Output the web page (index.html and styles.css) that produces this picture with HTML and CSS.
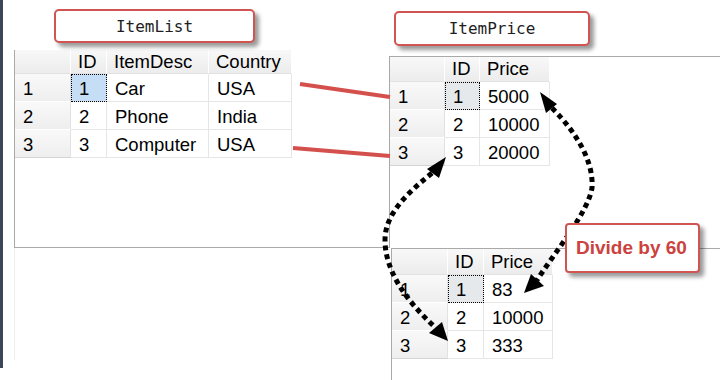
FILE: index.html
```html
<!DOCTYPE html>
<html lang="en">
	<head>
		<meta charset="utf-8" />
		<title>ItemList / ItemPrice</title>
		<link rel="stylesheet" href="styles.css">
	</head>
	<body>
		<div class="board">
			<div class="edge"></div>
			<div class="gutter"></div>

			<!-- result grid: ItemList -->
			<div class="pane pane-list">
				<div class="grid grid-list">
					<div class="cell head"></div>
					<div class="cell head">ID</div>
					<div class="cell head">ItemDesc</div>
					<div class="cell head">Country</div>

					<div class="cell rowhead">1</div>
					<div class="cell current">1</div>
					<div class="cell">Car</div>
					<div class="cell">USA</div>

					<div class="cell rowhead">2</div>
					<div class="cell">2</div>
					<div class="cell">Phone</div>
					<div class="cell">India</div>

					<div class="cell rowhead last">3</div>
					<div class="cell">3</div>
					<div class="cell">Computer</div>
					<div class="cell">USA</div>
				</div>
			</div>

			<!-- result grid: ItemPrice -->
			<div class="pane pane-price">
				<div class="grid grid-price">
					<div class="cell head"></div>
					<div class="cell head">ID</div>
					<div class="cell head">Price</div>

					<div class="cell rowhead">1</div>
					<div class="cell current idle">1</div>
					<div class="cell">5000</div>

					<div class="cell rowhead">2</div>
					<div class="cell">2</div>
					<div class="cell">10000</div>

					<div class="cell rowhead last">3</div>
					<div class="cell">3</div>
					<div class="cell">20000</div>
				</div>
			</div>

			<!-- result grid: after update -->
			<div class="pane pane-result">
				<div class="grid grid-result">
					<div class="cell head"></div>
					<div class="cell head">ID</div>
					<div class="cell head">Price</div>

					<div class="cell rowhead">1</div>
					<div class="cell current idle">1</div>
					<div class="cell">83</div>

					<div class="cell rowhead">2</div>
					<div class="cell">2</div>
					<div class="cell">10000</div>

					<div class="cell rowhead last">3</div>
					<div class="cell">3</div>
					<div class="cell">333</div>
				</div>
			</div>

			<svg class="links" width="720" height="380" viewBox="0 0 720 380">
				<!-- join lines -->
				<line x1="300" y1="84" x2="390" y2="97" class="join" />
				<line x1="293" y1="148" x2="390" y2="156" class="join" />

				<!-- 5000 -> 83 -->
				<path class="dots" d="M552 108 C 572 128, 594 158, 592 188 C 588 212, 558 248, 537 280" />
				<polygon points="540,92 557,104 546,113" />
				<polygon points="524,293 531,274 544,286" />

				<!-- 3 -> 3 -->
				<path class="dots" d="M432 173 C 405 195, 385 215, 385 240 C 385 270, 405 300, 436 328" />
				<polygon points="446,157 427,169 439,178" />
				<polygon points="448,341 429,333 442,322" />
			</svg>

			<div class="label label-list">ItemList</div>
			<div class="label label-price">ItemPrice</div>
			<div class="note">Divide by 60</div>
		</div>
	</body>
</html>
```

FILE: styles.css
```css
body {
	margin: 0;
	background: white;
	font-family: "Liberation Sans", Arial, sans-serif;
	overflow: hidden;
}

.board {
	position: relative;
	width: 720px;
	height: 380px;
	overflow: hidden;
	background: #fff;
}

/* dark window frame on the far left */
.edge {
	position: absolute;
	left: 0;
	top: 0;
	width: 3px;
	height: 368px;
	background: #3b4658;
}
.gutter {
	position: absolute;
	left: 14px;
	top: 248px;
	width: 1px;
	height: 112px;
	background: #efefef;
}

/* result panes */
.pane {
	position: absolute;
	box-sizing: border-box;
	background: #fff;
	border: 0 solid #a9a9a9;
}
.pane-list {
	left: 14px;
	top: 50px;
	width: 376px;
	height: 198px;
	border-left-width: 1px;
	border-bottom-width: 1px;
}
.pane-price {
	left: 389px;
	top: 56px;
	right: 0;
	height: 192px;
	border-left-width: 1px;
	border-top-width: 1px;
}
.pane-result {
	left: 391px;
	top: 248px;
	right: 0;
	bottom: 0;
	border-left-width: 1px;
	border-top-width: 1px;
}

.grid {
	display: grid;
	width: max-content;
	font-size: 18.5px;
	color: #000;
}
.grid-list {
	grid-template-columns: 56px 36px 102px 83px;
	grid-template-rows: 24px repeat(3, 28px);
}
.grid-price {
	grid-template-columns: 55px 35px 70px;
	grid-template-rows: 25px repeat(3, 28px);
}
.grid-result {
	grid-template-columns: 56px 36px 69px;
	grid-template-rows: 26px repeat(3, 28px);
}

.cell {
	display: flex;
	align-items: center;
	box-sizing: border-box;
	padding: 2px 0 0 8px;
	white-space: nowrap;
	border-right: 1px solid #e6e6e6;
	border-bottom: 1px solid #e6e6e6;
}
.head {
	padding: 0 0 0 7px;
	background: linear-gradient(#f8f8f8, #ececec);
	border-right-color: #fff;
	border-bottom-color: #e2e2e2;
}
.rowhead {
	background: linear-gradient(#f9f9f9, #eeeeee);
	border-right-color: #e2e2e2;
	border-bottom-color: #fff;
}
.rowhead.last {
	border-bottom-color: #d4d4d4;
}
.current {
	background: #c5def6;
	outline: 1px dotted #000;
	outline-offset: -1px;
}
.current.idle {
	background: #e6e9ec;
}

/* arrows and connectors */
.links {
	position: absolute;
	left: 0;
	top: 0;
	pointer-events: none;
}
.links .join {
	stroke: #d4504c;
	stroke-width: 4;
}
.links .dots {
	fill: none;
	stroke: #000;
	stroke-width: 5;
	stroke-dasharray: 5 4;
}
.links polygon {
	fill: #000;
}

/* callout boxes */
.label,
.note {
	position: absolute;
	box-sizing: border-box;
	display: flex;
	align-items: center;
	background: #fff;
	border: 2px solid #d05552;
	border-radius: 5px;
	box-shadow: 4px 4px 4px rgba(0, 0, 0, 0.4);
}
.label {
	justify-content: center;
	font-family: "DejaVu Sans Mono", "Liberation Mono", monospace;
	font-size: 16px;
	color: #1e1e1e;
}
.label-list {
	left: 54px;
	top: 9px;
	width: 201px;
	height: 34px;
}
.label-price {
	left: 394px;
	top: 11px;
	width: 196px;
	height: 35px;
}
.note {
	left: 565px;
	top: 223px;
	width: 135px;
	height: 50px;
	padding-left: 9px;
	border-radius: 4px;
	font-size: 19px;
	font-weight: bold;
	color: #cc423e;
}
```
